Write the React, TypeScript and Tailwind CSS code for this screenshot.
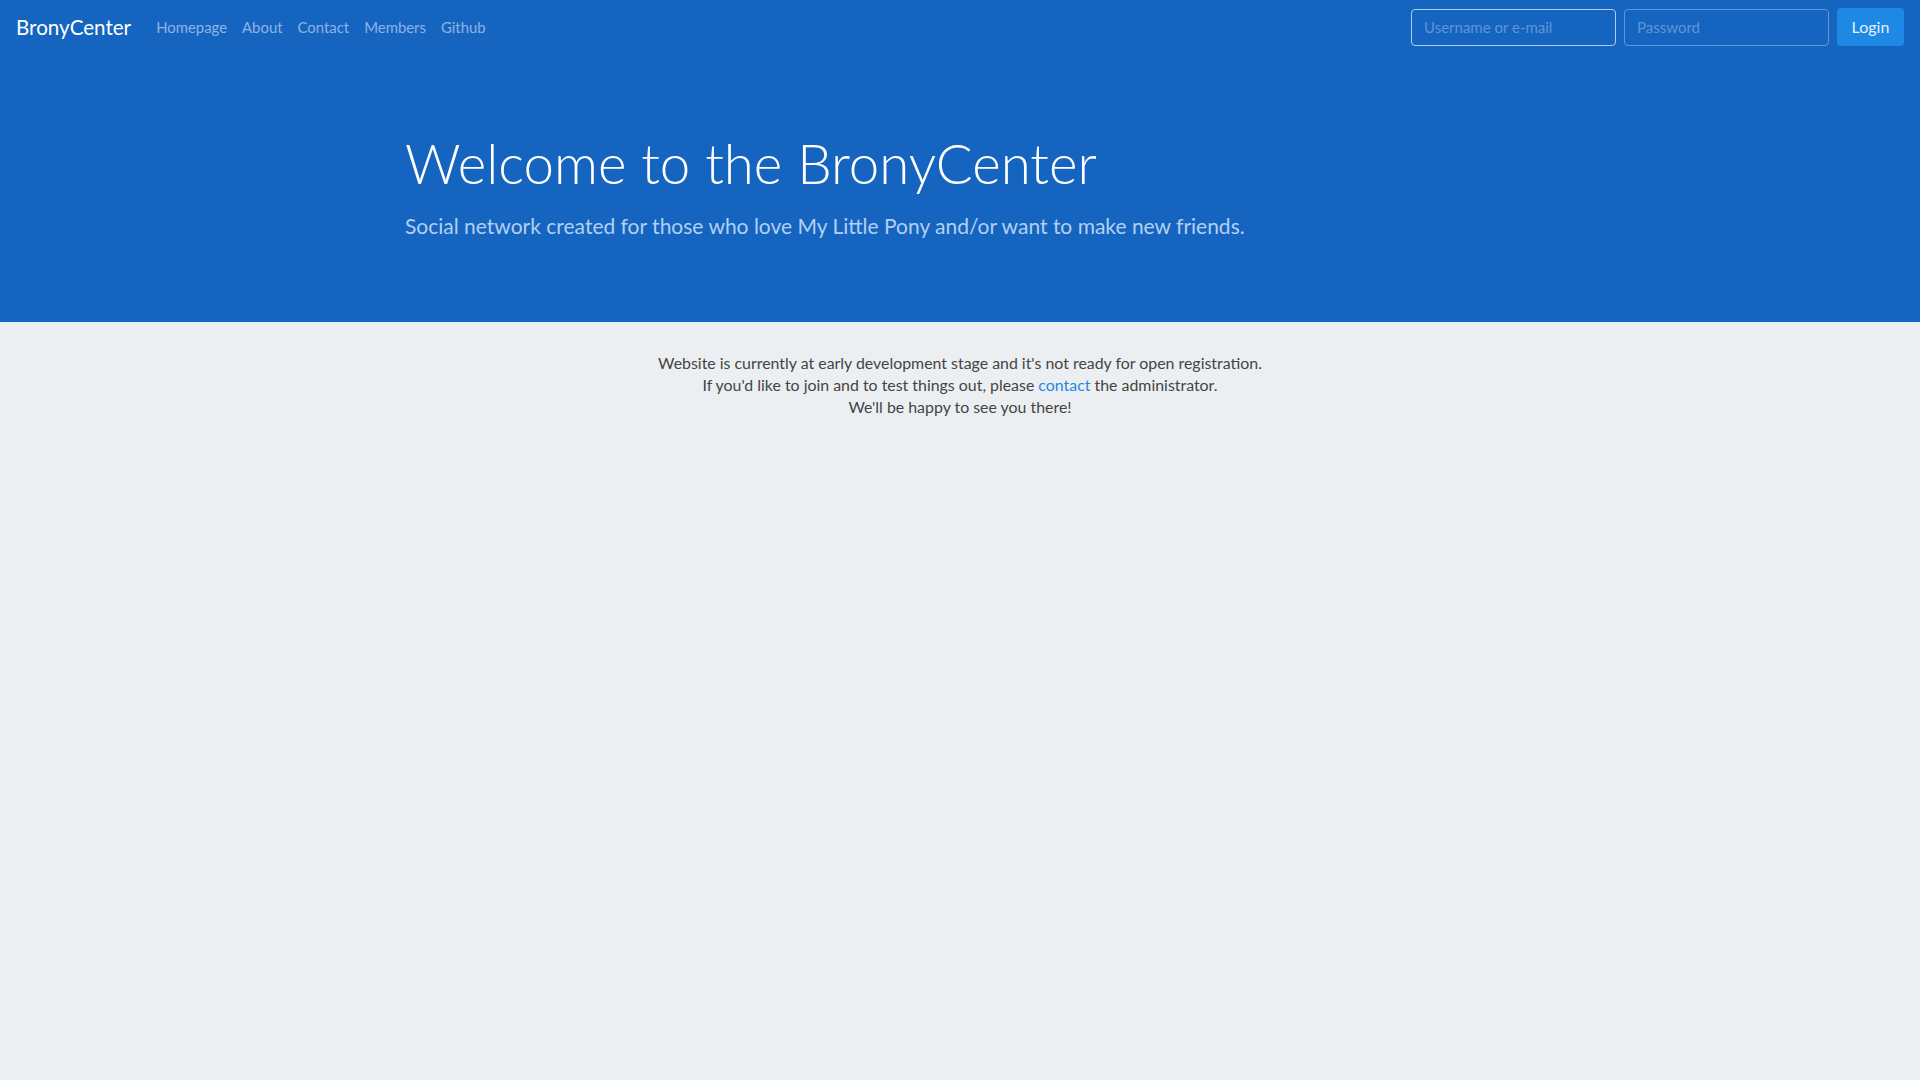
const links = ["Homepage", "About", "Contact", "Members", "Github"];

export default function App() {
  return (
    <div className="min-h-screen bg-[#eceff1] font-['Lato',sans-serif] font-light">
      <header className="bg-[#1565c0]">
        <nav className="flex h-[54px] items-center px-4">
          <a href="#" className="mr-[25px] text-[20.6px] font-normal text-white">
            BronyCenter
          </a>
          <ul className="flex items-center gap-[15px]">
            {links.map((link) => (
              <li key={link}>
                <a href="#" className="text-[14.9px] font-normal text-[#8db4e3]">
                  {link}
                </a>
              </li>
            ))}
          </ul>
          <form className="ml-auto flex items-center gap-2">
            <input
              type="text"
              placeholder="Username or e-mail"
              className="h-[37px] w-[205px] rounded border border-[#a9cdf4] bg-transparent px-3 text-[15px] font-normal text-white placeholder:text-[#5f95d6] focus:outline-none"
            />
            <input
              type="password"
              placeholder="Password"
              className="h-[37px] w-[205px] rounded border border-[#5d95d8] bg-transparent px-3 text-[15px] font-normal text-white placeholder:text-[#5f95d6] focus:outline-none"
            />
            <button
              type="button"
              className="h-[38px] w-[67px] rounded bg-[#1e88e5] text-[16px] font-normal text-[#e3f2fd]"
            >
              Login
            </button>
          </form>
        </nav>

        <div className="mx-auto w-[1140px] px-[15px] pt-[77px] pb-[81px]">
          <h1 className="text-[54.6px] leading-[1.2] text-white">
            Welcome to the BronyCenter
          </h1>
          <p className="mt-[13px] text-[21px] font-normal leading-[1.5] text-[#b3d0f2]">
            Social network created for those who love My Little Pony and/or want to make new friends.
          </p>
        </div>
      </header>

      <main className="pt-[30px] text-center text-[15.9px] font-normal leading-[22px] text-[#444]">
        <p>Website is currently at early development stage and it's not ready for open registration.</p>
        <p>
          If you'd like to join and to test things out, please{" "}
          <a href="#" className="text-[#1e88e5]">
            contact
          </a>{" "}
          the administrator.
        </p>
        <p>We'll be happy to see you there!</p>
      </main>
    </div>
  );
}
